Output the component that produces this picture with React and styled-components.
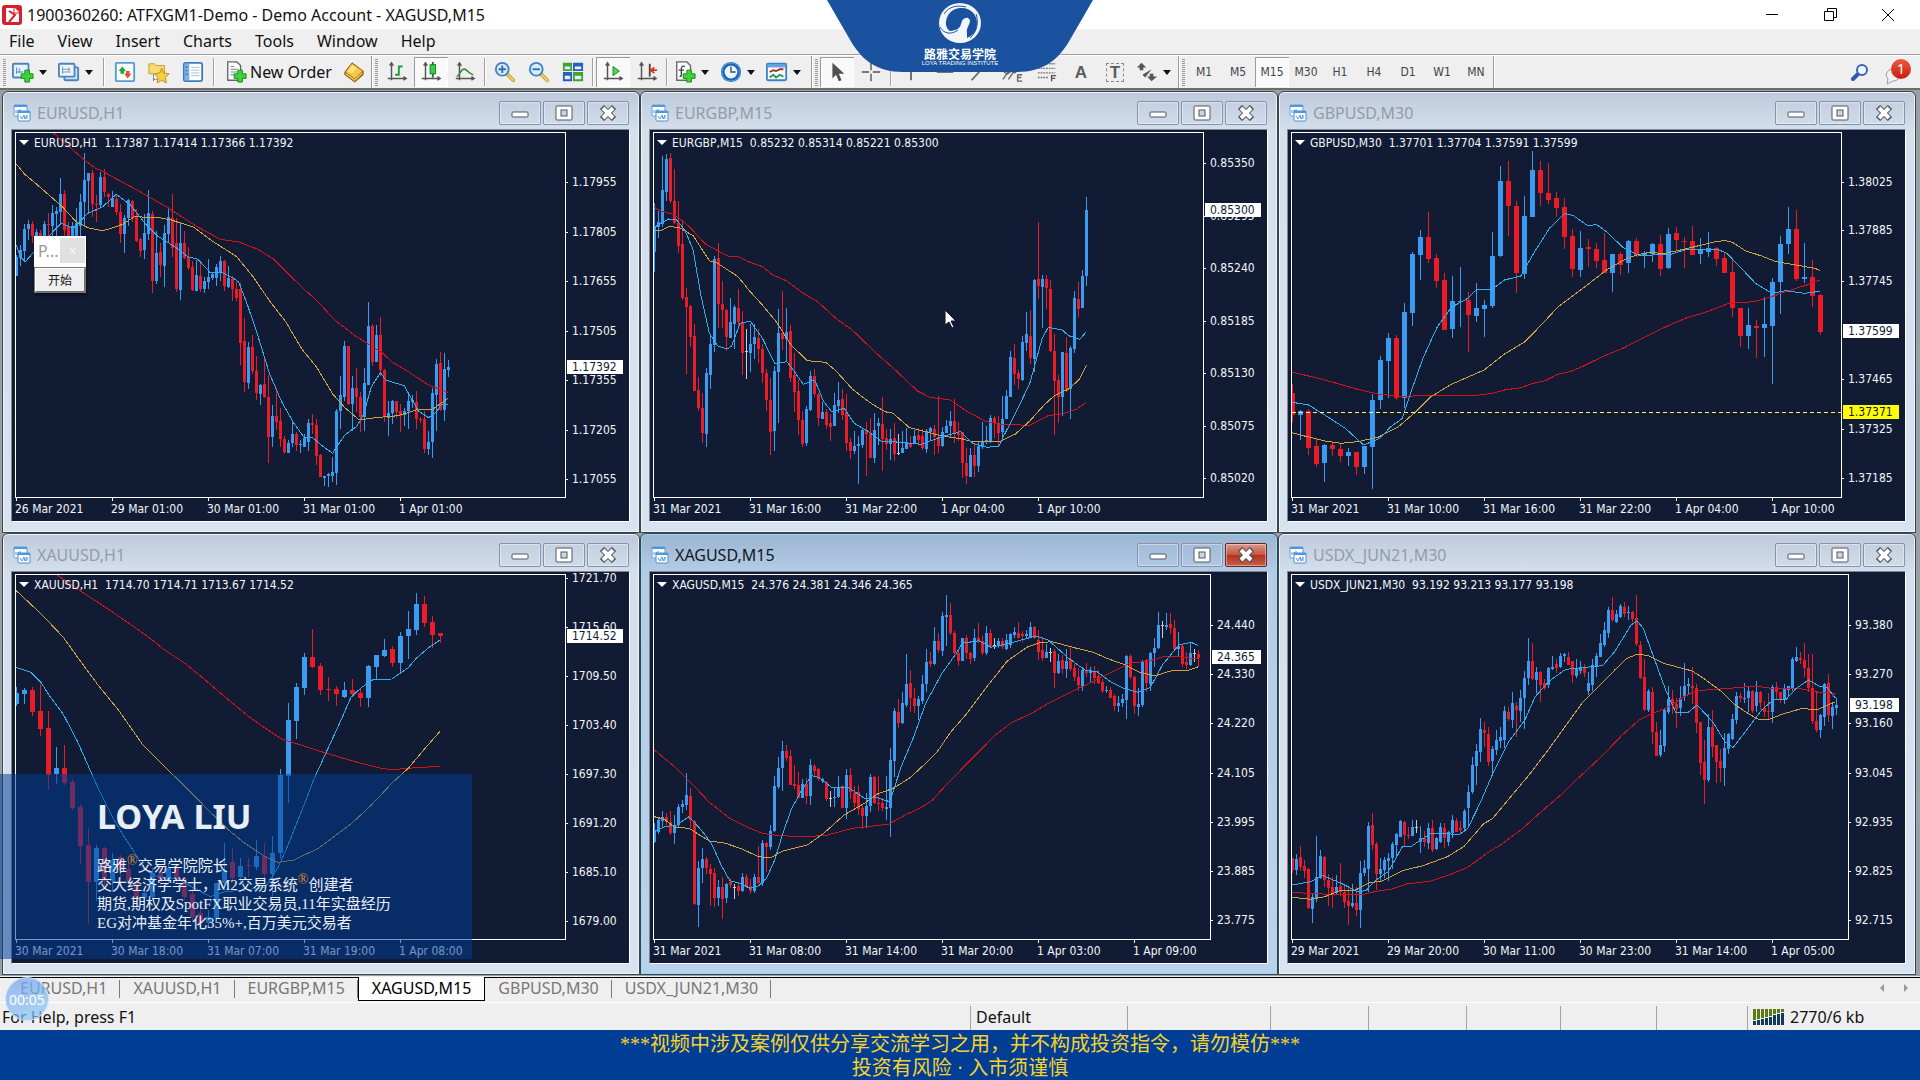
import React from 'react';
import styled, { createGlobalStyle } from 'styled-components';

const UI_FONT = '"Noto Sans", "Open Sans", "Noto Sans CJK SC", sans-serif';
const CHART_FONT = '"DejaVu Sans Condensed", "Noto Sans", sans-serif';
const SERIF_FONT = '"Liberation Serif", "Noto Sans CJK SC", serif';

const UP = '#3b9bf0';
const DOWN = '#ea1c27';
const FLAT = '#c4ccd4';

const GlobalStyle = createGlobalStyle`
  * { box-sizing: border-box; }
  body { margin: 0; background: #003c92; font-family: ${UI_FONT}; font-size: 16px; color: #111; }
  button { font: inherit; color: inherit; margin: 0; padding: 0; border: 0; background: none; }
`;

/* ---------- chart data ---------- */
// candles: direction, high, body top, body bottom, low
// lines: x,y pairs; both use the grid below

const GRID_X = 2.45;
const GRID_Y = 3;

const EURUSD = {
  title: 'EURUSD,H1',
  quote: '1.17387 1.17414 1.17366 1.17392',
  origin: [29.4, 120],
  step: 4,
  frame: 553,
  prices: [[275, '1.17955'], [425, '1.17805'], [572, '1.17655'], [722, '1.17505'], [870, '1.17355'], [1019, '1.17205'], [1166, '1.17055']],
  tags: [[832, '1.17392', '#fff']],
  times: ['26 Mar 2021', '29 Mar 01:00', '30 Mar 01:00', '31 Mar 01:00', '1 Apr 01:00'],
  red: '130,128 205,208 235,236 245,240 340,303 410,352 480,408 540,448 585,456 630,477 670,507 710,556 750,603 775,630 820,690 870,737 935,787 960,815 1000,845 1050,885 1097,907',
  gold: '40,222 60,252 90,283 150,347 185,393 215,413 250,422 270,416 300,403 330,380 390,383 420,390 475,412 520,453 580,500 620,560 660,632 700,695 740,778 775,830 815,912 845,953 880,990 920,983 975,977 1020,960 1060,958 1097,925',
  cyan: '40,465 50,500 62,515 80,490 110,450 150,400 180,415 215,370 250,352 285,313 320,345 355,400 385,437 430,472 460,500 485,508 515,548 545,548 570,563 585,577 605,640 630,730 660,850 690,935 720,1000 745,1042 765,1042 790,1068 815,1090 825,1070 845,1035 875,1008 890,975 910,890 932,848 945,870 990,887 1010,930 1025,963 1050,983 1070,965 1080,945 1097,943',
  candles: `U,495,500,557,557 U,465,480,503,527 U,403,417,483,517 U,390,403,417,450 D,393,403,437,460 U,417,427,450,470
    D,420,428,450,470 U,393,403,440,470 D,370,402,405,450 U,345,370,407,440 U,352,362,372,438 U,264,312,365,400
    D,300,312,420,437 D,395,408,445,460 U,395,408,440,450 U,355,398,440,450 U,312,337,408,437 U,190,270,337,410
    U,248,250,272,372 D,240,250,342,380 D,315,343,346,395 U,247,260,345,352 D,238,260,307,322 D,310,312,322,350
    U,303,325,350,352 D,318,327,365,375 D,343,365,433,460 U,375,383,433,488 U,328,330,385,408 D,330,332,385,395
    D,357,380,453,455 D,443,447,482,502 U,372,430,480,508 U,300,370,432,450 D,362,372,572,608 U,423,490,573,582
    D,460,487,525,560 U,405,430,527,590 U,352,382,432,460 D,312,383,475,502 D,385,460,598,607 U,395,458,600,630
    D,422,460,503,508 D,470,500,535,540 D,512,532,600,603 U,510,555,602,603 D,515,557,597,605 U,560,573,597,610
    U,508,562,575,597 U,550,553,563,570 U,522,530,565,587 U,498,512,550,572 D,510,512,588,602 U,528,565,590,595
    D,557,568,597,632 D,575,597,625,632 D,580,597,758,825 D,685,752,877,905 U,757,770,880,897 D,735,770,843,852
    D,798,843,910,930 U,883,885,913,945 D,802,883,920,925 D,855,920,1040,1118 U,945,978,1040,1070 D,895,978,995,1020
    D,955,993,1047,1072 D,1037,1047,1087,1092 U,1050,1060,1088,1088 U,995,1033,1060,1072 D,1025,1033,1065,1082 U,1050,1062,1065,1088
    U,1033,1045,1070,1072 U,988,1000,1055,1082 D,972,1000,1005,1033 D,988,1005,1097,1125 D,1092,1095,1160,1162 U,1157,1159,1164,1188
    U,1150,1153,1157,1190 U,1100,1145,1158,1175 U,957,963,1150,1185 U,857,915,962,1018 U,753,768,920,933 D,768,768,943,945
    U,857,893,943,1022 D,835,895,920,967 D,905,920,982,1025 U,835,880,982,1022 U,637,708,885,885 D,702,708,815,827
    U,705,735,815,817 D,682,735,840,857 D,837,840,982,997 U,932,968,985,1037 U,930,933,968,1003 D,933,933,965,985
    D,943,963,977,1025 U,955,963,975,1007 U,912,932,963,1018 U,915,930,937,953 D,903,935,987,1018 D,982,986,990,1000
    D,963,987,1077,1088 U,1023,1055,1077,1095 U,895,910,1055,1105 U,807,822,915,1023 D,787,820,960,962 U,788,838,960,993 U,810,830,840,860`,
};

const EURGBP = {
  title: 'EURGBP,M15',
  quote: '0.85232 0.85314 0.85221 0.85300',
  origin: [24.5, 120],
  step: 4,
  frame: 553,
  prices: [[218, '0.85350'], [378, '0.85295'], [533, '0.85240'], [692, '0.85185'], [848, '0.85130'], [1007, '0.85075'], [1163, '0.85020']],
  tags: [[361, '0.85300', '#fff']],
  times: ['31 Mar 2021', '31 Mar 16:00', '31 Mar 22:00', '1 Apr 04:00', '1 Apr 10:00'],
  red: '35,352 50,362 80,373 100,388 125,415 160,462 215,498 240,500 270,517 300,530 325,555 360,573 400,610 435,635 480,685 520,720 575,785 630,845 680,903 710,922 760,930 800,963 845,993 880,1003 955,1006 1000,977 1040,970 1070,957 1092,938',
  gold: '35,423 55,420 70,410 95,412 130,437 170,512 190,520 240,560 270,605 300,645 335,697 370,765 410,812 455,817 480,842 520,897 560,935 600,965 620,970 660,1013 700,1025 740,1038 790,1047 815,1055 880,1055 920,1032 955,993 990,945 1015,917 1050,897 1075,870 1094,826',
  cyan: '35,412 70,387 90,390 110,420 130,480 150,620 170,730 190,768 215,777 225,767 245,700 270,693 300,745 330,820 360,815 375,840 400,883 428,870 450,935 470,965 500,955 525,1000 560,1025 590,1053 640,1057 690,1063 740,1040 785,1025 815,1060 850,1072 880,1068 890,1040 920,970 955,880 985,747 1000,712 1035,720 1050,737 1078,748 1092,727',
  candles: `U,340,412,487,545 U,362,395,412,443 U,198,300,402,412 U,193,207,305,332 D,190,205,333,338 D,237,333,400,402
    D,333,400,468,488 D,393,462,623,630 D,593,622,650,852 D,645,647,740,770 D,703,738,903,903 D,862,900,955,963
    D,910,955,1030,1058 U,835,850,1032,1070 U,733,763,855,898 U,498,507,765,785 D,460,505,643,713 D,573,643,660,713
    D,657,660,740,782 U,625,697,743,745 U,645,650,703,778 D,597,653,695,712 D,662,695,788,855 W,717,783,786,867
    U,703,762,788,845 U,703,742,763,807 D,718,745,778,820 D,763,777,848,880 D,838,848,930,962 D,865,930,1025,1095
    U,828,843,1023,1083 U,657,730,845,998 D,603,730,747,780 U,653,725,747,812 D,705,722,865,877 D,788,855,905,965
    D,870,903,990,1035 D,963,990,1062,1070 U,947,957,1060,1067 U,843,857,960,963 D,837,857,912,922 D,908,912,985,1007
    U,937,967,987,987 D,957,967,1005,1018 D,973,998,1012,1053 U,910,945,1007,1007 U,877,930,947,970 D,898,928,975,990
    D,912,967,1060,1083 D,1045,1057,1083,1108 U,1022,1067,1083,1092 U,1037,1062,1067,1182 U,1015,1020,1065,1075 D,995,1020,1033,1158
    D,985,1032,1103,1105 U,970,1020,1103,1120 U,983,998,1008,1065 D,920,1003,1048,1142 D,1017,1045,1062,1080 U,1018,1047,1062,1110
    D,1000,1043,1092,1112 W,1033,1088,1091,1095 U,1022,1073,1088,1090 U,1013,1055,1077,1077 D,1037,1060,1072,1075 U,1020,1037,1060,1062
    D,1013,1035,1050,1068 D,1018,1038,1075,1080 U,1018,1022,1077,1088 U,1012,1015,1025,1050 D,1005,1018,1042,1095 D,918,1040,1067,1090
    U,1012,1027,1067,1072 U,990,1007,1030,1030 U,963,993,1007,1042 D,928,993,1028,1058 D,997,1028,1035,1052 D,1025,1027,1118,1163
    D,1073,1118,1158,1183 U,1075,1095,1160,1160 D,1063,1095,1128,1160 U,1055,1067,1128,1145 U,995,1052,1070,1078 U,1007,1050,1055,1062
    U,975,983,1052,1060 D,978,985,1000,1045 D,977,998,1028,1070 U,917,988,1025,1047 U,900,918,988,988 U,783,800,920,922
    D,763,803,852,885 D,840,850,867,897 U,738,755,870,872 U,667,733,758,783 D,660,738,805,822 U,568,570,807,845
    D,397,567,587,627 U,555,568,590,715 D,555,568,595,657 D,570,597,783,785 D,733,783,873,1035 D,855,870,922,1000
    U,785,787,922,978 D,742,788,903,907 U,768,773,897,987 U,603,625,778,790 D,577,627,657,680 U,540,557,655,655 U,322,360,557,587`,
};

const GBPUSD = {
  title: 'GBPUSD,M30',
  quote: '1.37701 1.37704 1.37591 1.37599',
  origin: [19.6, 120],
  step: 8,
  frame: 553,
  prices: [[275, '1.38025'], [421, '1.37885'], [572, '1.37745'], [866, '1.37465'], [1016, '1.37325'], [1163, '1.37185']],
  tags: [[724, '1.37599', '#fff'], [967, '1.37371', '#ff0']],
  level: 965,
  times: ['31 Mar 2021', '31 Mar 10:00', '31 Mar 16:00', '31 Mar 22:00', '1 Apr 04:00', '1 Apr 10:00'],
  red: '30,847 50,852 110,870 190,898 240,912 300,920 350,916 470,918 520,910 550,900 590,893 620,880 650,872 680,853 710,845 740,830 790,800 840,775 900,737 960,702 1000,682 1040,668 1100,640 1160,635 1200,622 1240,605 1290,585 1323,570',
  gold: '30,1028 60,1038 110,1053 150,1060 190,1055 240,1042 290,1010 330,968 370,920 420,883 500,840 550,792 600,755 640,705 680,652 740,597 800,540 850,505 880,493 905,487 940,491 1000,475 1060,457 1090,451 1110,458 1140,482 1180,498 1215,515 1250,522 1310,535 1323,541',
  cyan: '30,937 70,945 120,983 160,1015 205,1065 245,1045 270,1012 300,985 320,910 350,805 385,712 420,652 460,625 482,598 520,598 550,570 590,558 620,493 660,415 698,370 720,378 755,408 775,403 800,425 840,472 880,497 960,492 1000,477 1070,477 1095,490 1130,535 1165,580 1205,610 1240,602 1285,610 1323,604',
  candles: `D,883,908,975,995 U,960,963,975,1050 D,958,963,1073,1095 D,1045,1068,1122,1130 U,1063,1065,1118,1175 D,1058,1065,1077,1097
    D,1062,1077,1098,1115 U,1075,1087,1098,1128 D,1085,1087,1130,1155 U,1067,1068,1130,1152 U,912,930,1070,1197 U,798,810,930,957
    U,730,743,812,923 D,735,743,925,930 U,638,667,925,955 U,487,492,668,707 U,420,440,495,570 D,367,440,507,520
    D,492,503,572,593 D,550,570,720,720 U,558,633,717,743 U,530,632,637,712 D,607,630,675,787 U,578,655,678,695
    U,630,645,657,742 U,425,498,648,655 U,228,273,498,500 D,213,273,348,437 D,332,348,550,610 U,318,378,552,567
    U,183,240,380,380 D,213,240,308,347 D,220,308,330,342 D,305,323,353,380 D,325,350,440,477 D,418,438,537,560
    U,423,473,540,560 D,448,470,478,530 D,458,478,513,533 D,430,510,548,550 U,492,493,548,605 D,487,492,525,555
    U,450,452,518,548 D,443,452,495,500 U,483,490,498,533 U,458,462,493,515 D,435,462,537,557 U,413,432,535,537
    D,412,430,450,480 D,440,453,456,533 D,408,453,495,495 U,445,480,493,522 U,427,473,485,502 D,470,473,507,528
    D,490,505,548,548 D,510,545,653,682 D,653,655,738,770 U,653,705,738,777 D,690,708,713,803 U,622,702,713,800
    U,565,577,708,882 U,437,462,577,673 U,352,417,462,492 D,360,417,567,572 U,458,560,567,578 D,510,560,618,652 D,613,615,725,735`,
};

const XAUUSD = {
  title: 'XAUUSD,H1',
  quote: '1714.70 1714.71 1713.67 1714.52',
  origin: [29.4, 126],
  step: 8,
  frame: 553,
  prices: [[144, '1721.70'], [291, '1715.60'], [437, '1709.50'], [584, '1703.40'], [731, '1697.30'], [878, '1691.20'], [1025, '1685.10'], [1172, '1679.00']],
  tags: [[317, '1714.52', '#fff']],
  times: ['30 Mar 2021', '30 Mar 18:00', '31 Mar 07:00', '31 Mar 19:00', '1 Apr 08:00'],
  red: '140,135 200,185 260,233 330,292 370,327 400,357 455,402 500,447 560,510 610,560 650,595 690,627 750,650 800,670 850,688 885,700 930,714 960,719 1010,714 1078,709',
  gold: '38,180 75,222 105,257 155,322 195,390 240,465 290,540 350,645 410,718 450,765 510,840 560,900 600,940 650,980 680,997 720,990 780,955 860,882 910,825 960,760 1000,715 1045,650 1078,604',
  cyan: '40,412 75,427 100,457 120,495 155,553 190,635 235,760 275,860 300,912 330,968 355,1020 385,1040 430,1045 470,1070 515,1100 550,1085 600,1080 650,1072 680,1015 700,962 740,840 770,745 800,665 830,585 860,502 885,473 915,448 960,447 1000,413 1020,385 1050,353 1078,330',
  candles: `U,470,488,522,527 U,473,480,492,522 D,470,480,545,557 D,463,543,597,617 D,543,595,735,780 U,652,713,732,762
    D,645,713,758,765 D,747,755,833,840 D,823,830,948,1002 D,895,945,1055,1182 U,945,953,1055,1112 D,950,953,1052,1080
    U,968,990,1052,1085 D,975,982,1020,1060 D,985,1018,1055,1063 D,1050,1055,1103,1130 U,1080,1090,1103,1125 U,1015,1028,1100,1110
    D,1010,1030,1052,1075 U,1000,1015,1050,1062 D,1005,1015,1048,1060 D,1040,1045,1100,1110 D,1070,1093,1160,1175 D,1130,1150,1180,1195
    U,1140,1160,1178,1190 U,1058,1060,1165,1172 U,938,1022,1060,1080 D,955,997,1045,1060 U,985,1007,1040,1055 D,983,1004,1008,1040
    U,930,978,1010,1020 D,940,978,1033,1050 U,917,968,1033,1098 U,717,735,970,987 U,518,570,738,818 U,458,470,573,627
    U,370,380,473,495 D,297,380,410,413 D,398,407,480,495 D,442,477,480,513 D,467,477,492,527 U,455,480,500,503
    D,448,480,492,495 D,478,488,503,530 U,405,408,503,530 U,375,375,410,450 U,327,360,378,382 D,348,357,400,410
    U,307,318,398,425 U,243,297,318,387 U,190,222,300,315 D,197,222,278,292 D,258,276,315,353 D,308,310,318,340`,
};

const XAGUSD = {
  title: 'XAGUSD,M15',
  quote: '24.376 24.381 24.346 24.365',
  origin: [24.5, 126],
  step: 4,
  frame: 560,
  prices: [[284, '24.440'], [431, '24.330'], [578, '24.220'], [728, '24.105'], [875, '23.995'], [1022, '23.885'], [1169, '23.775']],
  tags: [[382, '24.365', '#fff']],
  times: ['31 Mar 2021', '31 Mar 08:00', '31 Mar 14:00', '31 Mar 20:00', '1 Apr 03:00', '1 Apr 09:00'],
  red: '35,660 80,705 120,752 170,817 220,865 260,890 300,910 340,917 410,920 460,915 520,895 570,888 610,882 650,855 690,832 715,812 750,765 790,715 830,665 870,615 910,578 960,550 1000,520 1060,483 1110,455 1150,430 1200,400 1250,392 1280,381 1320,380 1368,387',
  gold: '35,860 60,868 85,892 120,895 150,918 170,933 210,940 250,957 290,980 320,983 350,963 410,945 450,910 500,855 550,820 580,793 620,775 660,745 700,700 730,662 760,608 800,552 850,470 900,393 950,350 980,338 1010,335 1060,352 1110,367 1150,388 1190,405 1220,425 1260,438 1300,423 1340,422 1368,410',
  cyan: '36,905 60,890 90,885 120,860 150,900 175,940 200,1008 220,1052 245,1060 270,1075 290,1068 310,1045 330,990 350,910 370,840 395,783 420,737 440,743 470,773 510,772 550,805 580,803 612,815 640,710 670,622 700,520 740,430 775,370 790,340 830,332 860,352 910,338 970,318 1000,330 1050,385 1090,420 1120,425 1150,453 1185,475 1220,487 1250,473 1280,405 1320,345 1350,337 1368,347',
  candles: `U,880,900,935,938 U,862,870,905,912 U,842,862,872,893 D,848,860,875,885 D,843,875,910,915 U,855,885,908,942
    U,822,830,885,893 U,810,822,832,850 U,730,795,825,840 D,773,797,870,895 D,870,872,1122,1125 U,993,1013,1125,1190
    U,953,988,1013,1058 D,982,988,1015,1032 D,1003,1018,1032,1128 D,1015,1030,1103,1130 U,1050,1070,1103,1128 D,1042,1070,1108,1167
    U,1058,1063,1105,1118 D,1045,1055,1065,1073 W,1062,1072,1075,1107 D,1060,1068,1083,1097 U,1028,1040,1083,1085 D,1033,1040,1068,1075
    D,1047,1067,1083,1093 U,1032,1040,1082,1088 D,947,1040,1060,1062 U,930,940,1060,1068 D,937,940,950,1025 U,885,903,950,960
    U,737,768,903,907 U,682,713,770,778 U,633,663,713,783 D,645,663,683,693 D,660,678,765,765 D,705,763,767,777
    D,727,765,803,805 U,747,762,803,803 D,745,763,797,822 U,687,705,797,825 D,703,708,722,742 D,713,718,747,753
    U,743,748,753,760 D,752,755,808,812 W,782,805,808,832 U,772,800,803,830 U,738,770,802,805 D,765,768,833,835
    U,718,735,833,868 D,713,735,787,807 D,768,790,820,830 D,765,787,838,855 D,828,835,857,897 U,790,828,857,893
    U,733,740,828,845 D,738,740,820,822 D,737,818,822,843 D,803,820,835,842 U,738,832,837,870 U,653,690,835,920
    U,533,543,693,740 D,507,545,580,595 U,487,520,580,583 U,373,463,525,530 D,420,460,503,545 D,473,505,528,550
    U,497,508,528,570 U,435,463,512,523 U,357,395,463,485 D,367,393,402,410 U,292,333,403,405 D,308,333,360,368
    U,245,258,362,377 U,195,255,260,348 D,220,255,310,315 D,303,310,370,373 D,360,370,393,407 U,323,325,392,393
    D,315,323,370,388 D,365,370,387,402 U,298,325,385,392 D,280,325,335,338 D,318,333,370,375 U,288,310,368,375
    D,298,308,348,350 W,323,345,348,357 U,323,333,345,353 D,325,333,350,357 U,312,330,358,360 U,308,312,345,353
    U,290,305,315,323 D,277,308,325,325 D,303,313,318,335 U,300,312,318,325 U,277,290,320,325 D,288,290,325,328
    D,300,330,365,390 D,320,360,383,393 U,343,365,385,385 W,355,367,370,397 D,358,363,430,473 U,372,393,430,433
    D,375,390,418,432 U,357,393,418,445 D,352,388,418,422 D,403,415,440,453 D,415,440,465,482 U,410,420,470,483
    D,400,422,430,440 U,412,423,430,460 D,407,425,445,462 D,420,437,458,462 D,447,455,482,490 U,467,480,483,488
    D,470,480,503,503 D,492,498,527,543 U,497,518,527,547 U,493,507,518,530 U,375,378,510,567 D,373,378,440,447
    D,438,440,527,552 U,473,523,530,558 U,390,392,525,530 D,387,390,460,485 U,367,370,463,482 U,323,355,370,412
    U,247,285,355,357 W,273,285,288,325 U,250,285,290,300 D,250,283,295,312 D,270,293,358,363 U,307,347,357,378
    D,345,347,402,410 D,365,395,405,418 U,340,370,405,408 W,357,370,373,397 D,360,372,383,410`,
};

const USDX = {
  title: 'USDX_JUN21,M30',
  quote: '93.192 93.213 93.177 93.198',
  origin: [19.6, 126],
  step: 4,
  frame: 560,
  prices: [[284, '93.380'], [431, '93.270'], [578, '93.160'], [728, '93.045'], [875, '92.935'], [1022, '92.825'], [1169, '92.715']],
  tags: [[526, '93.198', '#fff']],
  times: ['29 Mar 2021', '29 Mar 20:00', '30 Mar 11:00', '30 Mar 23:00', '31 Mar 14:00', '1 Apr 05:00'],
  red: '30,1088 80,1090 130,1094 200,1094 240,1083 275,1077 310,1062 370,1053 410,1037 460,1012 510,967 540,945 590,900 640,845 690,793 730,745 790,677 840,613 880,570 910,552 950,532 990,500 1020,482 1070,478 1120,473 1165,468 1210,476 1280,477 1310,485 1361,492',
  gold: '30,1102 75,1108 110,1100 150,1080 180,1083 220,1058 250,1053 300,1022 350,1007 410,980 450,950 500,880 520,867 560,808 610,735 660,655 700,587 740,520 780,470 820,420 850,385 875,373 900,376 940,400 1010,423 1040,447 1080,483 1110,520 1140,545 1170,567 1195,570 1230,553 1280,535 1315,540 1361,515',
  cyan: '30,1065 75,1055 105,1037 150,1060 190,1085 210,1082 235,1050 265,1025 300,950 320,950 370,910 440,913 460,895 490,820 520,735 560,635 600,570 625,500 660,453 700,418 790,407 820,365 860,285 875,273 890,295 915,380 945,480 970,548 1000,547 1022,525 1060,575 1090,635 1110,653 1140,605 1180,540 1210,508 1240,508 1265,475 1295,450 1320,468 1340,472 1361,505',
  candles: `D,983,985,1020,1030 U,972,987,1020,1035 D,948,980,1010,1022 D,990,1008,1022,1045 D,1015,1018,1135,1138 U,1093,1100,1137,1178
    U,918,1040,1103,1115 U,960,978,1045,1048 D,978,980,1050,1070 D,1033,1050,1075,1128 D,1042,1072,1092,1133 U,1035,1070,1090,1095
    D,1000,1068,1085,1097 D,1065,1085,1115,1133 D,1075,1112,1128,1185 U,1062,1118,1127,1135 D,1070,1118,1140,1158 U,993,1028,1140,1193
    U,990,1015,1030,1037 U,877,888,1017,1087 D,850,885,945,960 D,935,943,1033,1080 U,985,1018,1033,1052 U,980,990,1020,1043
    U,968,983,993,1053 U,935,943,985,1018 U,910,912,945,978 U,870,872,920,920 D,873,875,915,947 D,890,914,918,927
    U,870,892,917,918 W,870,890,893,910 U,888,925,935,968 D,903,923,937,950 U,880,895,940,957 D,870,893,960,965
    U,922,925,958,960 U,880,890,937,940 D,880,893,925,955 U,903,905,935,948 U,855,870,908,925 D,865,872,907,907
    D,873,893,900,910 U,838,843,893,905 U,765,787,833,890 U,682,705,785,793 U,642,663,707,765 U,563,597,667,695
    D,575,600,610,652 D,592,612,695,707 U,647,658,693,733 U,600,630,660,675 U,590,622,632,655 U,527,543,630,655
    D,532,547,567,573 U,487,520,570,593 D,517,527,540,620 U,480,505,543,577 U,423,443,505,597 U,323,393,443,465
    D,340,392,448,450 U,412,425,450,490 D,423,425,465,517 D,447,460,475,480 U,412,415,465,475 U,378,412,417,420
    D,387,403,415,430 U,370,377,412,415 U,370,372,378,397 D,367,380,405,405 D,392,393,435,458 U,387,418,438,445
    U,393,415,422,433 D,403,410,428,440 U,427,460,483,495 U,387,405,465,483 U,370,378,412,440 U,312,340,380,382
    U,275,300,345,350 U,232,240,308,325 D,200,240,270,275 U,240,252,275,280 U,222,228,260,265 D,217,230,252,262
    U,228,245,248,270 D,243,245,267,275 D,195,265,343,347 D,333,345,443,447 D,387,440,540,543 U,477,483,540,547
    D,470,485,607,643 D,577,605,677,678 U,600,645,675,680 U,537,540,647,665 U,467,507,545,553 D,480,508,525,553
    D,505,522,538,593 U,468,503,533,557 U,400,467,500,513 U,443,463,468,493 D,412,467,475,523 D,463,475,580,610
    D,575,577,700,735 D,630,697,750,822 U,553,590,750,757 D,540,590,652,680 D,645,645,697,758 D,657,693,713,755
    U,610,653,715,768 U,610,613,657,672 U,553,567,627,630 U,487,498,570,583 D,490,498,503,515 U,458,505,508,520
    U,470,483,505,545 D,480,482,543,548 U,453,487,527,547 D,483,485,520,537 D,512,535,545,560 D,490,543,547,567
    U,465,470,545,580 D,457,470,487,507 D,485,487,510,520 U,463,478,510,523 U,467,467,480,497 U,380,387,473,483
    U,352,380,393,397 D,367,383,390,403 D,340,390,415,440 D,373,413,475,487 D,372,475,573,583 D,487,573,600,605
    U,552,555,600,623 U,460,462,562,587 D,433,460,555,575 U,523,530,557,597 U,505,525,533,555`,
};

/* ---------- chart ---------- */

const ChartSvg = styled.svg`
  display: block;
  width: 100%;
  height: auto;
  background: #111c34;
  font-family: ${CHART_FONT};
  font-size: 12px;
`;

const Label = styled.text`
  fill: ${(p) => p.$color || '#f4f6fa'};
  white-space: pre;
`;

function Chart({ data }) {
  const [ox, oy] = data.origin;
  const y = (v) => Math.round((v - oy) / GRID_Y);
  const line = (pts) => pts.split(' ').map((p) => {
    const [px, py] = p.split(',');
    return `${((px - ox) / GRID_X).toFixed(1)},${((py - oy) / GRID_Y).toFixed(1)}`;
  }).join(' ');
  const half = data.step === 8 ? 2 : 1;
  const colors = { U: UP, D: DOWN, W: FLAT };
  const candles = data.candles.trim().split(/\s+/).map((c) => c.split(','));

  return (
    <ChartSvg viewBox="0 0 617 391" role="img" aria-label={`${data.title} chart`}>
      <g shapeRendering="crispEdges">
        {candles.map(([dir, high, top, bottom, low], i) => {
          const x = 4 + i * data.step;
          const left = i === 0 ? x : x - half;
          return (
            <g key={i} fill={colors[dir]}>
              <rect x={x} y={y(high)} width="1" height={Math.max(1, y(low) - y(high))} />
              <rect x={left} y={y(top)} width={x + half + 1 - left} height={Math.max(1, y(bottom) - y(top))} />
            </g>
          );
        })}
        <g fill="none">
          <polyline points={line(data.red)} stroke="#d0141f" />
          <polyline points={line(data.gold)} stroke="#cca242" />
          <polyline points={line(data.cyan)} stroke="#32aeea" />
        </g>
        {data.level && (
          <path d={`M4 ${y(data.level)}.5H${data.frame}`} stroke="#ffff50" strokeDasharray="4 3" />
        )}
        <rect x="3.5" y="2.5" width={data.frame - 3} height="365" fill="none" stroke="#fff" />
        {data.times.map((t, i) => (
          <rect key={t} x={4 + i * 96} y="368" width="1" height="3" fill="#fff" />
        ))}
        {data.prices.map(([v]) => (
          <rect key={v} x={data.frame + 1} y={y(v)} width="2" height="1" fill="#fff" />
        ))}
      </g>
      <path d="M7 10h10l-5 5z" fill="#fff" />
      <Label x="22" y="17">{`${data.title}  ${data.quote}`}</Label>
      {data.prices.map(([v, text]) => (
        <Label key={text} x={data.frame + 7} y={y(v) + 4}>{text}</Label>
      ))}
      {data.tags.map(([v, text, color]) => (
        <g key={text}>
          <rect x={data.frame + 2} y={y(v) - 7} width={609 - data.frame} height="14" fill={color} />
          <Label x={data.frame + 7} y={y(v) + 4} $color="#111c34">{text}</Label>
        </g>
      ))}
      {data.times.map((t, i) => (
        <Label key={t} x={3 + i * 96} y="383">{t}</Label>
      ))}
    </ChartSvg>
  );
}

/* ---------- chart windows ---------- */

const Desktop = styled.main`
  display: grid;
  grid-template-columns: repeat(3, 1fr);
  padding: 1px 4px 1px 2px;
  background: #9aa0a6;
  border-top: 2px solid #6c6c6c;
`;

const ChartWindow = styled.section`
  border: 1px solid #3b434c;
  border-radius: 6px 6px 0 0;
  box-shadow: inset 0 0 0 1px ${(p) => (p.$active ? '#8fe0f4' : '#eef4fa')};
  padding: 0 9px 10px 8px;
  background: ${(p) => (p.$active
    ? 'linear-gradient(#9bb4d0, #b4cce6 38px, #b9d1ea)'
    : 'linear-gradient(#becadb, #d4dfec 38px, #d7e3f1)')};
`;

const WindowHeader = styled.header`
  display: flex;
  align-items: center;
  gap: 6px;
  height: 37px;
  padding: 4px 1px 0 2px;
`;

const WindowTitle = styled.h2`
  flex: 1;
  margin: 0;
  font-size: 16px;
  line-height: 20px;
  font-weight: 400;
  color: ${(p) => (p.$active ? '#101820' : '#959ca4')};
`;

const WindowButtons = styled.div`
  display: flex;
  gap: 2px;
`;

const WindowButton = styled.button`
  display: grid;
  place-items: center;
  width: 42px;
  height: 24px;
  border: 1px solid ${(p) => (p.$danger ? '#5e2a2a' : '#8494b0')};
  border-radius: 2px;
  box-shadow: inset 0 0 0 1px rgba(255, 255, 255, 0.4);
  background: ${(p) => (p.$danger ? 'linear-gradient(#dc9a8c, #c4523e 50%, #b0301c 50%, #c8604a)' : 'transparent')};
`;

const ChartInset = styled.div`
  border: 1px solid;
  border-color: #80868e #fff #fff #80868e;
`;

function WindowIcon() {
  return (
    <svg width="18" height="18" viewBox="0 0 18 18">
      <rect x="1" y="1" width="13" height="11" rx="1" fill="#fff" stroke="#5fa0dc" />
      <path d="M1 1h13v2H1z" fill="#4f97dc" />
      <path d="M3 9V6m2 3V6l2 2V5" stroke="#4f97dc" fill="none" />
      <rect x="5" y="7" width="12" height="10" rx="1" fill="#fff" stroke="#4a8fd2" />
      <path d="M5 7h12v2H5z" fill="#4f97dc" />
      <path d="M7 12l2 3 2-4 1 4 2-4v4" stroke="#4f97dc" fill="none" />
    </svg>
  );
}

function Window({ data, active }) {
  return (
    <ChartWindow $active={active}>
      <WindowHeader>
        <WindowIcon />
        <WindowTitle $active={active}>{data.title}</WindowTitle>
        <WindowButtons>
          <WindowButton aria-label="Minimize">
            <svg width="18" height="16" viewBox="0 0 18 16"><rect x="1" y="7" width="16" height="5" rx="1" fill="#fff" stroke="#50565e" /></svg>
          </WindowButton>
          <WindowButton aria-label="Maximize">
            <svg width="18" height="16" viewBox="0 0 18 16">
              <rect x="1" y="1" width="16" height="14" rx="1" fill="#fff" stroke="#50565e" />
              <rect x="6" y="5" width="6" height="6" fill="#c8d6e6" stroke="#50565e" />
            </svg>
          </WindowButton>
          <WindowButton aria-label="Close" $danger={active}>
            <svg width="18" height="16" viewBox="0 0 18 16">
              <path d="M3 2l12 12M15 2L3 14" stroke="#50565e" strokeWidth="6" />
              <path d="M4 3l10 10M14 3L4 13" stroke="#fff" strokeWidth="4" />
            </svg>
          </WindowButton>
        </WindowButtons>
      </WindowHeader>
      <ChartInset><Chart data={data} /></ChartInset>
    </ChartWindow>
  );
}

/* ---------- title bar and menu ---------- */

const Page = styled.div`
  position: relative;
  display: flex;
  flex-direction: column;
  min-height: 100vh;
  background: #efefef;
`;

const TitleBar = styled.header`
  display: flex;
  align-items: center;
  height: 29px;
  padding: 0 3px 0 2px;
  background: #fff;
`;

const AppTitle = styled.h1`
  flex: 1;
  margin: 0 0 0 5px;
  font-size: 16px;
  line-height: 20px;
  font-weight: 400;
`;

const CaptionButton = styled.button`
  display: grid;
  place-items: center;
  width: 58px;
  height: 28px;
`;

const MenuBar = styled.nav`
  display: flex;
  height: 26px;
  border-bottom: 1px solid #a0a0a0;
`;

const MenuItem = styled.button`
  height: 24px;
  padding: 0 14px 0 9px;
  line-height: 22px;
`;

/* ---------- toolbar ---------- */

const Toolbar = styled.div`
  display: flex;
  height: 33px;
  border-top: 1px solid #fff;
`;

const ToolGroup = styled.div`
  display: flex;
  align-items: center;
  padding-left: 3px;
  padding-right: ${(p) => p.$end || 0}px;
  border-right: 1px solid #9c9c9c;
  box-shadow: 1px 0 0 #fff;
`;

const Grip = styled.span`
  width: 3px;
  height: 27px;
  margin-right: 2px;
  background: repeating-linear-gradient(#9a9a9a 0 1px, #efefef 1px 2px);
`;

const Divider = styled.span`
  width: 2px;
  height: 28px;
  margin: 0 ${(p) => (p.$roomy ? 3 : 2)}px;
  border-left: 1px solid #a0a0a0;
  border-right: 1px solid #fff;
`;

const ToolButton = styled.button`
  display: flex;
  align-items: center;
  justify-content: center;
  gap: 5px;
  width: ${(p) => (p.$drop ? 46 : 34)}px;
  height: 30px;
  padding-right: ${(p) => (p.$drop ? 4 : 0)}px;
  background: ${(p) => (p.$pressed ? '#f9f9f9' : 'none')};
  box-shadow: ${(p) => (p.$pressed ? 'inset 1px 1px 0 #9a9a9a, inset -1px -1px 0 #fff' : 'none')};
`;

const NewOrderButton = styled.button`
  display: flex;
  align-items: center;
  gap: 3px;
  width: 119px;
  padding-left: 7px;
  white-space: nowrap;
`;

const PeriodButton = styled(ToolButton)`
  font-size: 12px;
  color: #444;
  font-family: ${CHART_FONT};
`;

const ToolbarEnd = styled.div`
  display: flex;
  align-items: center;
  gap: 6px;
  margin-left: auto;
  padding-right: 9px;
`;

const ChatButton = styled.button`
  position: relative;
  width: 28px;
  height: 30px;
`;

const Badge = styled.span`
  position: absolute;
  right: 0;
  top: 2px;
  width: 20px;
  height: 20px;
  border-radius: 50%;
  background: linear-gradient(#ea5a3c, #c81c10);
  color: #fff;
  font-size: 14px;
  line-height: 20px;
  text-align: center;
`;

const Plus = () => <path d="M14 10h5v4h4v5h-4v4h-5v-4h-4v-5h4z" fill="#3fd23a" stroke="#128a18" />;
const Axes = () => <path d="M6 3v18M2 19h20M4 5l2-3 2 3M19 17l3 2-3 2" stroke="#555" strokeWidth="1.6" fill="none" />;
const Lens = () => (
  <>
    <path d="M14 14l7 7" stroke="#c99a2a" strokeWidth="4" strokeLinecap="round" />
    <path d="M14 14l7 7" stroke="#f3d060" strokeWidth="2" strokeLinecap="round" />
    <circle cx="9" cy="9" r="7" fill="#d6ecfb" stroke="#3b82c4" strokeWidth="2" />
  </>
);

const ICONS = {
  newChart: <><rect x="1" y="3" width="17" height="15" rx="1" fill="#e6f1fb" stroke="#4a86bd" strokeWidth="2" /><path d="M5 14V7m0 5h7M8 8v5" stroke="#4a86bd" fill="none" /><Plus /></>,
  profiles: <><rect x="7" y="7" width="15" height="14" rx="1" fill="#cfe2f4" stroke="#4a86bd" strokeWidth="2" /><rect x="1" y="3" width="17" height="14" rx="1" fill="#eef6fd" stroke="#4a86bd" strokeWidth="2" /><path d="M5 6v8m0-2h9M5 9h8m-2-2l2 2-2 2" stroke="#6a93b8" fill="none" /></>,
  market: <><rect x="2" y="2" width="20" height="20" rx="1" fill="#f4fafe" stroke="#5a9ad0" strokeWidth="2" /><path d="M9 6l4 5h-2v3H7v-3H5z" fill="#25a52c" /><path d="M15 19l-4-5h2v-3h4v3h2z" fill="#e2542c" /></>,
  favorites: <><path d="M1 3h6l2 2h9v9H1z" fill="#f6dc72" stroke="#c79a2a" /><path d="M6 15v7M6 20h5" stroke="#555" strokeDasharray="2 1" /><path d="M15 8l2 5 6 1-4 4 1 6-5-3-5 3 1-6-4-4 6-1z" fill="#f8cf3e" stroke="#b98a1c" /></>,
  navigator: <><rect x="2" y="2" width="20" height="20" rx="2" fill="#fff" stroke="#3a7abf" strokeWidth="2" /><path d="M3 3h5v18H3z" fill="#7fb2e4" /><path d="M10 7h9M10 10h9M10 13h9M10 16h9" stroke="#9cc0e0" /><path d="M5 6v1m0 3v1m0 3v1" stroke="#1b4d86" strokeWidth="2" /></>,
  order: <><path d="M3 1h10l4 4v16H3z" fill="#fff" stroke="#666" strokeWidth="1.5" /><path d="M6 6h4M6 9h8M6 12h8M6 15h4" stroke="#777" /><Plus /></>,
  gold: <><path d="M2 12L10 2l12 9v4l-9 8L2 15z" fill="#b87c12" stroke="#8a5c0c" /><path d="M3 12l7-9 11 8-8 8z" fill="#f4c842" /><path d="M5 11l5-7 5 4-6 6z" fill="#fbe486" /><path d="M3 14l10 7 8-8" stroke="#fff0b0" fill="none" /></>,
  bars: <><Axes /><path d="M14 5v11M14 6h4M10 15h4" stroke="#1d9a38" strokeWidth="2" /></>,
  candles: <><Axes /><path d="M14 1v17" stroke="#147a28" strokeWidth="2" /><rect x="11" y="4" width="6" height="10" fill="#32d24a" stroke="#147a28" /></>,
  line: <><Axes /><path d="M3 17c4-2 5-10 9-8s4 5 9 6" stroke="#2b8a3e" strokeWidth="1.6" fill="none" /></>,
  zoomIn: <><Lens /><path d="M9 5v8M5 9h8" stroke="#2b6cb0" strokeWidth="2" /></>,
  zoomOut: <><Lens /><path d="M5 9h8" stroke="#2b6cb0" strokeWidth="2" /></>,
  tile: <><path d="M1 2h10v9H1zM12 12h11v10H12z" fill="#3fa52c" /><path d="M12 2h11v9H12zM1 12h10v10H1z" fill="#2a5cc0" /><path d="M3 6h6v3H3zM14 6h7v3h-7zM3 16h6v4H3zM14 16h7v4h-7z" fill="#e4f0f8" /></>,
  scroll: <><Axes /><path d="M12 6v10l7-5z" fill="#4fd45c" stroke="#15872a" /></>,
  shift: <><Axes /><path d="M15 3v14" stroke="#444" strokeWidth="2" /><path d="M23 10h-6m3-3l-4 3 4 3" stroke="#d23c14" strokeWidth="2" fill="none" /></>,
  indicators: <><path d="M3 1h11l4 4v16H3z" fill="#fff" stroke="#666" strokeWidth="1.5" /><path d="M12 6c-3-1-4 0-4 3v6c0 2-1 2-2 2M5 10h6" stroke="#444" strokeWidth="1.5" fill="none" /><Plus /></>,
  clock: <><circle cx="12" cy="12" r="9" fill="#eaf5ff" stroke="#1d62b4" strokeWidth="4" /><circle cx="12" cy="12" r="10" fill="none" stroke="#5fb0f4" strokeWidth="1" /><path d="M12 6v6h5" stroke="#34506e" strokeWidth="1.5" fill="none" /></>,
  template: <><rect x="1" y="3" width="21" height="18" rx="1" fill="#f8fcff" stroke="#3f82c8" strokeWidth="2" /><path d="M2 4h19v3H2z" fill="#62a2e0" /><path d="M4 12l4-2 3 1 4-2 4 0" stroke="#a82a1c" strokeWidth="2" fill="none" /><path d="M4 18l4-3 3 3 4-3 4 2" stroke="#2b9a48" strokeWidth="2" fill="none" /></>,
  cursor: <path d="M7 2v17l4-4 3 7 3-1-3-7h6z" fill="#505050" />,
  cross: <path d="M12 2v8m0 4v8M2 12h8m4 0h8" stroke="#777" strokeWidth="2" />,
  vline: <path d="M12 3v18" stroke="#666" strokeWidth="2" />,
  hline: <path d="M3 12h18" stroke="#666" strokeWidth="2" />,
  trend: <path d="M4 21L20 3" stroke="#666" strokeWidth="2" />,
  channel: <path d="M1 20L12 4M7 20L18 4M2 12l4 2 4-3 4 2 4-4M17 15h5M17 15v7h5M17 18h4" stroke="#666" strokeWidth="1.5" fill="none" />,
  fibo: <><path d="M2 3h19M2 8h19M2 13h19M2 18h12" stroke="#777" strokeWidth="1.5" strokeDasharray="2 1" /><path d="M17 22v-6h5M17 19h4" stroke="#555" strokeWidth="1.5" fill="none" /></>,
  arrows: <path d="M6 2l5 5-3 0v3H4V7L1 7zM17 22l-5-5h3v-3h4v3h4zM7 15l3 3 7-9" fill="#555" />,
};

function Icon({ name }) {
  return <svg width="22" height="22" viewBox="0 0 24 24">{ICONS[name]}</svg>;
}

const Caret = () => <svg width="8" height="5" viewBox="0 0 8 5"><path d="M0 0h8L4 5z" fill="#111" /></svg>;

function Tool({ name, drop, pressed }) {
  return (
    <ToolButton aria-label={name} $drop={drop} $pressed={pressed}>
      <Icon name={name} />
      {drop && <Caret />}
    </ToolButton>
  );
}

const Glyph = styled.span`
  font-family: "Liberation Sans", sans-serif;
  font-size: 17px;
  line-height: 17px;
  font-weight: 700;
  color: #5c5c5c;
  ${(p) => p.$boxed && 'border: 1px dashed #888; padding: 0 3px;'}
`;

/* ---------- tabs, status, banner ---------- */

const TabBar = styled.div`
  display: flex;
  align-items: flex-start;
  height: 25px;
  margin-top: 1px;
  border-top: 1px solid #000;
`;

const Tab = styled.button`
  height: ${(p) => (p.$active ? 24 : 22)}px;
  padding: 0 13px 2px;
  margin-top: ${(p) => (p.$active ? -1 : 0)}px;
  line-height: 20px;
  color: ${(p) => (p.$active ? '#000' : '#777')};
  background: ${(p) => (p.$active ? '#fff' : 'linear-gradient(#7c7c7c, #7c7c7c) right center / 1px 18px no-repeat')};
  border: ${(p) => (p.$active ? '1px solid #000' : '0')};
  border-top: 0;
  &:first-child { padding-left: 20px; }
`;

const TabScroll = styled.div`
  display: flex;
  gap: 18px;
  margin: 4px 11px 0 auto;
  line-height: 10px;
`;

const StatusBar = styled.footer`
  display: grid;
  grid-template-columns: 970fr 157fr 143fr 98fr 98fr 94fr 96fr 91fr 173fr;
  height: 28px;
  padding-top: 3px;
  border-top: 1px solid #fff;
`;

const StatusCell = styled.div`
  display: flex;
  align-items: center;
  gap: 5px;
  padding-left: 5px;
  padding-bottom: 2px;
  line-height: 20px;
  border-left: 1px solid #a4a4a4;
  &:first-child { border-left: 0; padding-left: 2px; }
`;

const Banner = styled.p`
  flex: 1;
  margin: 0;
  padding-top: 2px;
  background: #003d95;
  color: #f6d22c;
  font-family: ${SERIF_FONT};
  font-size: 20px;
  line-height: 24px;
  text-align: center;
`;

/* ---------- floating layers ---------- */

const Crest = styled.div`
  position: absolute;
  top: 0;
  left: 50%;
  width: 266px;
  height: 72px;
  margin-left: -133px;
  color: #fff;
  text-align: center;
  svg { display: block; }
`;

const CrestName = styled.div`
  position: absolute;
  inset: 47px 0 auto;
  font-family: "Noto Sans CJK SC", sans-serif;
  font-size: 12px;
  line-height: 14px;
  font-weight: 700;
  small {
    display: block;
    font-family: "Liberation Sans", sans-serif;
    font-size: 6px;
    line-height: 5px;
    font-weight: 400;
    white-space: nowrap;
  }
`;

const Presenter = styled.aside`
  position: absolute;
  left: 0;
  top: 774px;
  width: 472px;
  height: 185px;
  padding: 21px 0 0 97px;
  background: rgba(0, 60, 148, 0.53);
  color: #e8eef6;
  font-family: ${SERIF_FONT};
  font-size: 15px;
  line-height: 19px;
  white-space: nowrap;
  h3 {
    margin: 0 0 20px;
    font-family: ${UI_FONT};
    font-size: 34px;
    line-height: 42px;
  }
  p { margin: 0; }
  sup { font-size: 14px; line-height: 0; color: #e08a2c; }
`;

const Script = styled.div`
  position: absolute;
  left: 34px;
  top: 236px;
  width: 52px;
  background: #fff;
  box-shadow: 1px 2px 4px rgba(0, 0, 0, 0.5);
`;

const ScriptTitle = styled.div`
  display: flex;
  justify-content: space-between;
  height: 31px;
  padding: 2px 1px 4px 4px;
  color: #999;
  line-height: 26px;
  button { width: 25px; background: #e0e0e0; color: #f6f6f6; font-size: 14px; }
`;

const StartButton = styled.button`
  width: 100%;
  height: 26px;
  border: 2px solid;
  border-color: #fff #6c6c6c #6c6c6c #fff;
  outline: 1px solid #777;
  outline-offset: -1px;
  background: #efefef;
  font-size: 12px;
  font-family: "Noto Sans CJK SC", sans-serif;
  line-height: 20px;
`;

const Timer = styled.div`
  position: absolute;
  left: 5px;
  top: 977px;
  width: 44px;
  height: 44px;
  border: 1px solid rgba(220, 235, 255, 0.8);
  border-radius: 50%;
  background: linear-gradient(160deg, rgba(112, 160, 240, 0.7), rgba(140, 205, 245, 0.7));
  color: #fff;
  font-size: 14px;
  line-height: 44px;
  text-align: center;
`;

const Pointer = styled.svg`
  position: absolute;
  left: 944px;
  top: 309px;
`;

const MENUS = ['File', 'View', 'Insert', 'Charts', 'Tools', 'Window', 'Help'];
const PERIODS = ['M1', 'M5', 'M15', 'M30', 'H1', 'H4', 'D1', 'W1', 'MN'];
const TABS = ['EURUSD,H1', 'XAUUSD,H1', 'EURGBP,M15', 'XAGUSD,M15', 'GBPUSD,M30', 'USDX_JUN21,M30'];

export default function App() {
  return (
    <Page>
      <GlobalStyle />
      <TitleBar>
        <svg width="20" height="20" viewBox="0 0 20 20">
          <rect width="20" height="20" rx="3" fill="#d8202c" />
          <path d="M4 3h9l4 4v10H4z" fill="#fff" />
          <path d="M12 3v5h5" stroke="#d8202c" fill="none" />
          <path d="M7 6l6 4-6 7" stroke="#d8202c" strokeWidth="2" fill="none" />
        </svg>
        <AppTitle>1900360260: ATFXGM1-Demo - Demo Account - XAGUSD,M15</AppTitle>
        <CaptionButton aria-label="Minimize">
          <svg width="12" height="12" viewBox="0 0 12 12"><path d="M0 5.5h12" stroke="#000" /></svg>
        </CaptionButton>
        <CaptionButton aria-label="Restore">
          <svg width="13" height="13" viewBox="0 0 13 13"><path d="M.5 3.5h9v9h-9zM3.5 3V.5h9v9H10" stroke="#000" fill="none" /></svg>
        </CaptionButton>
        <CaptionButton aria-label="Close">
          <svg width="12" height="12" viewBox="0 0 12 12"><path d="M0 0l12 12M12 0L0 12" stroke="#000" /></svg>
        </CaptionButton>
      </TitleBar>

      <MenuBar>
        {MENUS.map((m) => <MenuItem key={m}>{m}</MenuItem>)}
      </MenuBar>

      <Toolbar>
        <ToolGroup>
          <Grip />
          <Tool name="newChart" drop />
          <Tool name="profiles" drop />
          <Divider $roomy />
          <Tool name="market" />
          <Tool name="favorites" />
          <Tool name="navigator" />
          <Divider $roomy />
          <NewOrderButton><Icon name="order" />New Order</NewOrderButton>
          <Tool name="gold" />
        </ToolGroup>
        <ToolGroup $end={3}>
          <Grip />
          <Tool name="bars" />
          <Tool name="candles" pressed />
          <Tool name="line" />
          <Divider />
          <Tool name="zoomIn" />
          <Tool name="zoomOut" />
          <Tool name="tile" />
          <Divider />
          <Tool name="scroll" pressed />
          <Tool name="shift" />
          <Divider />
          <Tool name="indicators" drop />
          <Tool name="clock" drop />
          <Tool name="template" drop />
        </ToolGroup>
        <ToolGroup>
          <Grip />
          <Tool name="cursor" pressed />
          <Tool name="cross" />
          <Divider />
          <Tool name="vline" />
          <Tool name="hline" />
          <Tool name="trend" />
          <Tool name="channel" />
          <Tool name="fibo" />
          <ToolButton><Glyph>A</Glyph></ToolButton>
          <ToolButton><Glyph $boxed>T</Glyph></ToolButton>
          <Tool name="arrows" drop />
        </ToolGroup>
        <ToolGroup>
          <Grip />
          {PERIODS.map((p) => <PeriodButton key={p} $pressed={p === 'M15'}>{p}</PeriodButton>)}
        </ToolGroup>
        <ToolbarEnd>
          <ToolButton aria-label="Search">
            <svg width="18" height="18" viewBox="0 0 18 18">
              <path d="M8 10l-6 6" stroke="#2f57b0" strokeWidth="4" strokeLinecap="round" />
              <circle cx="11" cy="7" r="5" fill="#f2f7ff" stroke="#3a62ba" strokeWidth="2" />
            </svg>
          </ToolButton>
          <ChatButton aria-label="Messages">
            <svg width="28" height="30" viewBox="0 0 28 30">
              <path d="M4 27l1-5a7 6 0 1 1 5 2z" fill="#f2f2f6" stroke="#9a9aa6" />
            </svg>
            <Badge>1</Badge>
          </ChatButton>
        </ToolbarEnd>
      </Toolbar>

      <Desktop>
        <Window data={EURUSD} />
        <Window data={EURGBP} />
        <Window data={GBPUSD} />
        <Window data={XAUUSD} />
        <Window data={XAGUSD} active />
        <Window data={USDX} />
      </Desktop>

      <TabBar>
        {TABS.map((t) => <Tab key={t} $active={t === 'XAGUSD,M15'}>{t}</Tab>)}
        <TabScroll>
          <button aria-label="Scroll left"><svg width="6" height="10" viewBox="0 0 6 10"><path d="M5 1v8L1 5z" fill="#999" /></svg></button>
          <button aria-label="Scroll right"><svg width="6" height="10" viewBox="0 0 6 10"><path d="M1 1v8l4-4z" fill="#999" /></svg></button>
        </TabScroll>
      </TabBar>

      <StatusBar>
        <StatusCell>For Help, press F1</StatusCell>
        <StatusCell>Default</StatusCell>
        <StatusCell />
        <StatusCell />
        <StatusCell />
        <StatusCell />
        <StatusCell />
        <StatusCell />
        <StatusCell>
          <svg width="32" height="16" viewBox="0 0 32 16" shapeRendering="crispEdges">
            {[11, 10, 9, 8, 7, 5, 4, 3].map((h, i) => (
              <g key={h}>
                <rect x={i * 4} y="0" width="3" height={h} fill="#5c7a14" />
                <rect x={i * 4} y={h + 1} width="3" height={15 - h} fill="#0f3c5c" />
              </g>
            ))}
          </svg>
          2770/6 kb
        </StatusCell>
      </StatusBar>

      <Banner>
        ***视频中涉及案例仅供分享交流学习之用，并不构成投资指令，请勿模仿***<br />
        投资有风险 · 入市须谨慎
      </Banner>

      <Crest>
        <svg width="266" height="72" viewBox="0 0 266 72">
          <path d="M0 0h266l-22 38c-12 22-28 34-54 34H76C50 72 34 60 22 38z" fill="#1a52a0" />
          <path fillRule="evenodd" d="M133 3a21 20 0 1 1 0 40a21 20 0 1 1 0-40zM135 8a15 15 0 0 0-16 17c1 4 3 6 5 6c6-1 9-3 10-7c1-5 4-7 7-6l2 2c0 5-4 8-3 13l0 5c7-3 10-8 10-15c0-8-6-15-15-15z" fill="#f2f6fc" />
          <path d="M113 27c4 7 11 8 18 3M117 14c5-8 14-9 22-7M149 14c3 8 1 18-6 24" stroke="#1a52a0" strokeWidth="1" fill="none" />
        </svg>
        <CrestName>路雅交易学院<small>LOYA TRADING INSTITUTE</small></CrestName>
      </Crest>

      <Script>
        <ScriptTitle>P...<button aria-label="Close">×</button></ScriptTitle>
        <StartButton>开始</StartButton>
      </Script>

      <Presenter>
        <h3>LOYA LIU</h3>
        <p>路雅<sup>®</sup>交易学院院长</p>
        <p>交大经济学学士，M2交易系统<sup>®</sup>创建者</p>
        <p>期货,期权及SpotFX职业交易员,11年实盘经历</p>
        <p>EG对冲基金年化35%+,百万美元交易者</p>
      </Presenter>

      <Timer>00:05</Timer>

      <Pointer width="13" height="20" viewBox="0 0 13 20">
        <path d="M1 1v15l4-3 3 6 2-1-3-6h5z" fill="#fff" stroke="#0a1020" />
      </Pointer>
    </Page>
  );
}
